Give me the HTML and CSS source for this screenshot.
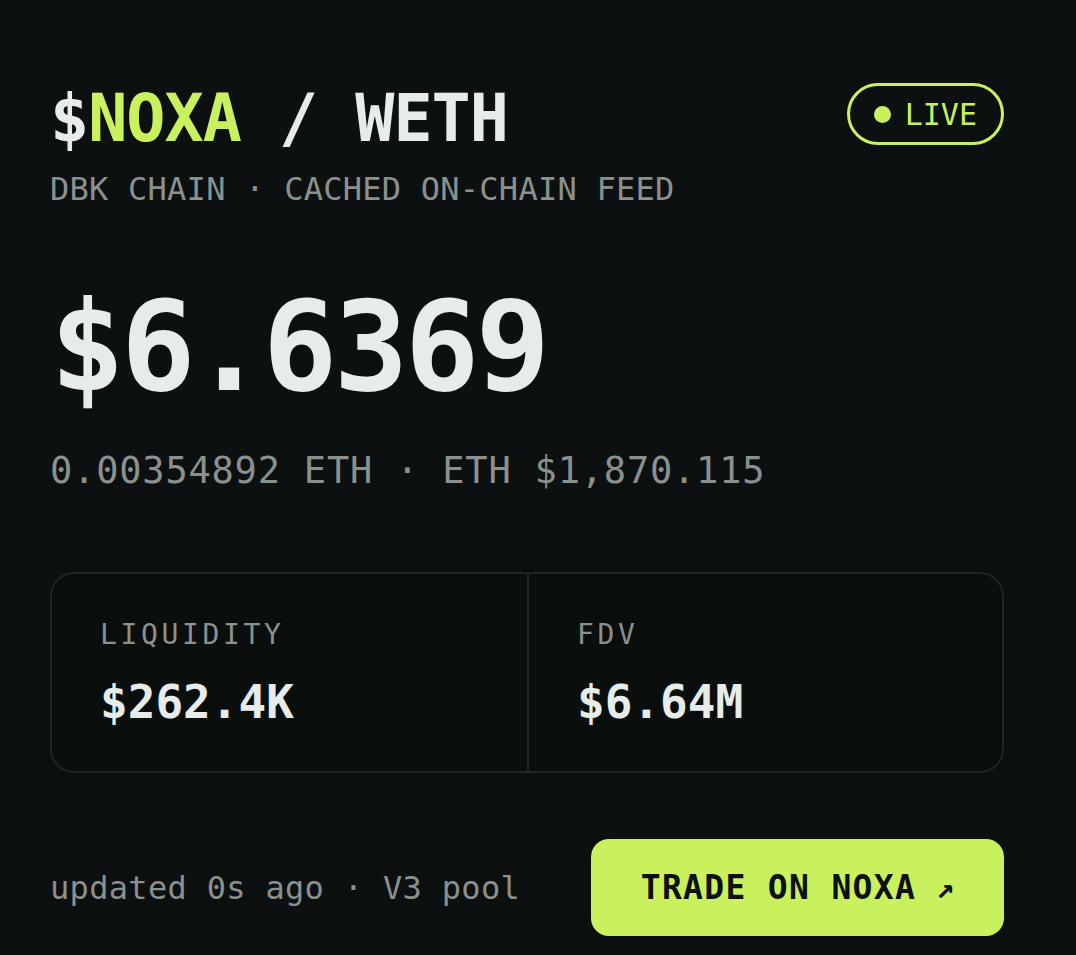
FILE: index.html
```html
<!DOCTYPE html>
<html lang="en">
<head>
    <meta charset="UTF-8">
    <meta name="viewport" content="width=device-width, initial-scale=1.0">
    <title>$NOXA / WETH</title>
    <link rel="stylesheet" href="styles.css">
</head>
<body>
    <div class="card">
        <div class="header">
            <div>
                <h1 class="pair"><span class="sym">$</span><span class="ticker">NOXA</span> / WETH</h1>
                <div class="subtitle">DBK CHAIN · CACHED ON-CHAIN FEED</div>
            </div>
            <div class="live"><span class="dot"></span>LIVE</div>
        </div>

        <div class="price">$6.6369</div>
        <div class="eth">0.00354892 ETH · ETH $1,870.115</div>

        <div class="stats">
            <div class="stat">
                <div class="stat-label">LIQUIDITY</div>
                <div class="stat-value">$262.4K</div>
            </div>
            <div class="stat">
                <div class="stat-label">FDV</div>
                <div class="stat-value">$6.64M</div>
            </div>
        </div>

        <div class="footer">
            <div class="updated">updated 0s ago · V3 pool</div>
            <a class="trade" href="#">TRADE ON NOXA <span class="arrow">↗</span></a>
        </div>
    </div>
</body>
</html>
```

FILE: styles.css
```css
body {
    margin: 0;
    background-color: #0c1010;
    color: #e6ecea;
    font-family: "DejaVu Sans Mono", "Liberation Mono", monospace;
}

.card {
    padding: 77px 72px 0 50px;
}

.header {
    display: flex;
    justify-content: space-between;
    align-items: flex-start;
}

.pair {
    margin: 0;
    font-size: 65px;
    font-weight: bold;
    line-height: 84px;
    letter-spacing: -0.015em;
    color: #e6ecea;
}

.ticker {
    color: #c9f15d;
}

.subtitle {
    margin-top: 9px;
    font-size: 32px;
    line-height: 38px;
    letter-spacing: 0.25px;
    color: #8a918e;
}

.live {
    display: flex;
    align-items: center;
    gap: 14px;
    margin-top: 6px;
    padding: 0 24px 0 24px;
    height: 56px;
    border: 3px solid #c9f15d;
    border-radius: 40px;
    color: #c9f15d;
    font-size: 30px;
}

.dot {
    width: 17px;
    height: 17px;
    border-radius: 50%;
    background: #c9f15d;
}

.price {
    margin-top: 69px;
    font-size: 124px;
    font-weight: bold;
    line-height: 140px;
    letter-spacing: -0.03em;
    color: #e6ecea;
}

.eth {
    margin-top: 32px;
    font-size: 37px;
    line-height: 44px;
    letter-spacing: 0.8px;
    color: #8a918e;
}

.stats {
    display: grid;
    grid-template-columns: 1fr 1fr;
    margin-top: 79px;
    border: 2px solid #1f2624;
    border-radius: 24px;
    background: #0a0e0d;
}

.stat {
    padding: 44px 48px 42px;
}

.stat + .stat {
    border-left: 2px solid #1f2624;
}

.stat-label {
    font-size: 28px;
    line-height: 34px;
    letter-spacing: 0.13em;
    color: #8a918e;
}

.stat-value {
    margin-top: 23px;
    font-size: 46px;
    font-weight: bold;
    line-height: 54px;
    color: #e6ecea;
}

.footer {
    display: flex;
    justify-content: space-between;
    align-items: center;
    margin-top: 66px;
}

.updated {
    font-size: 32px;
    color: #8a918e;
    letter-spacing: 0.01em;
}

.trade {
    display: flex;
    align-items: center;
    justify-content: center;
    gap: 20px;
    width: 413px;
    height: 97px;
    box-sizing: border-box;
    border-radius: 18px;
    background: #c9f15d;
    color: #0c1010;
    font-size: 33px;
    font-weight: bold;
    letter-spacing: 0.04em;
    text-decoration: none;
}

.arrow {
    font-size: 30px;
    letter-spacing: 0;
}
```
